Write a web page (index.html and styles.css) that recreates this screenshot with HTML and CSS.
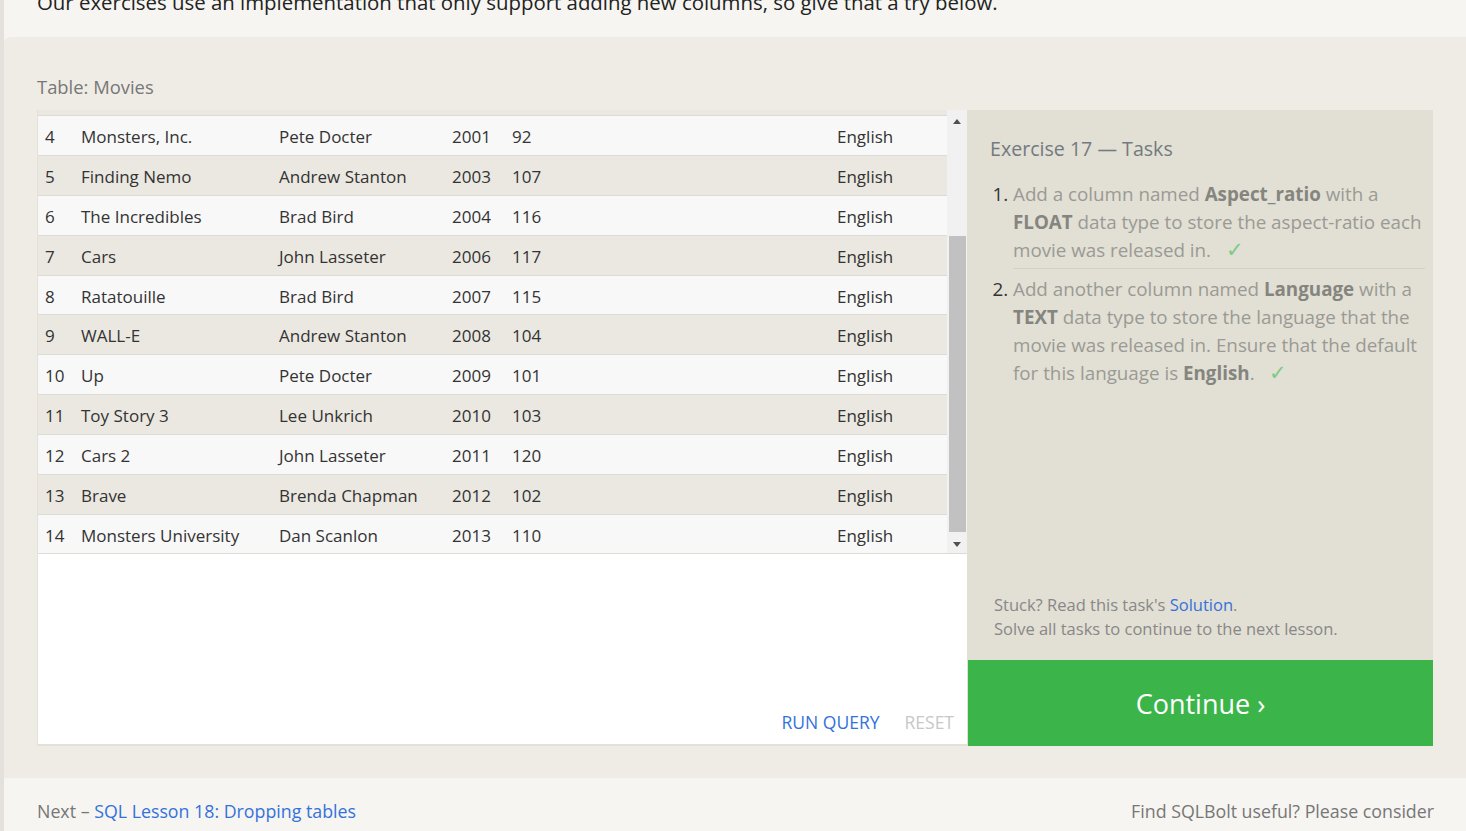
FILE: index.html
```html
<!DOCTYPE html>
<html>
<head>
<meta charset="utf-8">
<link rel="stylesheet" href="styles.css">
</head>
<body>
<div class="page">
  <div class="strip"></div>
  <div class="main">
    <div class="intro">
      <p>Our exercises use an implementation that only support adding new columns, so give that a try below.</p>
    </div>
    <section class="exercise">
      <div class="table-label">Table: Movies</div>
      <div class="workspace">
        <div class="left-pane">
          <div class="table-box">
            <div class="rows">
              <div class="row odd partial"><span></span><span></span><span></span><span></span><span></span><span></span><span></span></div>
              <div class="row even"><span>4</span><span>Monsters, Inc.</span><span>Pete Docter</span><span>2001</span><span>92</span><span></span><span>English</span></div>
              <div class="row odd"><span>5</span><span>Finding Nemo</span><span>Andrew Stanton</span><span>2003</span><span>107</span><span></span><span>English</span></div>
              <div class="row even"><span>6</span><span>The Incredibles</span><span>Brad Bird</span><span>2004</span><span>116</span><span></span><span>English</span></div>
              <div class="row odd"><span>7</span><span>Cars</span><span>John Lasseter</span><span>2006</span><span>117</span><span></span><span>English</span></div>
              <div class="row even"><span>8</span><span>Ratatouille</span><span>Brad Bird</span><span>2007</span><span>115</span><span></span><span>English</span></div>
              <div class="row odd"><span>9</span><span>WALL-E</span><span>Andrew Stanton</span><span>2008</span><span>104</span><span></span><span>English</span></div>
              <div class="row even"><span>10</span><span>Up</span><span>Pete Docter</span><span>2009</span><span>101</span><span></span><span>English</span></div>
              <div class="row odd"><span>11</span><span>Toy Story 3</span><span>Lee Unkrich</span><span>2010</span><span>103</span><span></span><span>English</span></div>
              <div class="row even"><span>12</span><span>Cars 2</span><span>John Lasseter</span><span>2011</span><span>120</span><span></span><span>English</span></div>
              <div class="row odd"><span>13</span><span>Brave</span><span>Brenda Chapman</span><span>2012</span><span>102</span><span></span><span>English</span></div>
              <div class="row even last"><span>14</span><span>Monsters University</span><span>Dan Scanlon</span><span>2013</span><span>110</span><span></span><span>English</span></div>
            </div>
            <div class="scrollbar">
              <div class="arrow up"></div>
              <div class="track"><div class="thumb"></div></div>
              <div class="arrow down"></div>
            </div>
          </div>
          <div class="editor">
            <div class="editor-actions">
              <span class="run">RUN QUERY</span>
              <span class="reset">RESET</span>
            </div>
          </div>
        </div>
        <div class="right-pane">
          <div class="tasks">
            <h2 class="tasks-title">Exercise 17 — Tasks</h2>
            <ol class="task-list">
              <li class="task done">Add a column named <b>Aspect_ratio</b> with a <b>FLOAT</b> data type to store the aspect-ratio each movie was released in. <span class="check">✓</span></li>
              <li class="task done">Add another column named <b>Language</b> with a <b>TEXT</b> data type to store the language that the movie was released in. Ensure that the default for this language is <b>English</b>. <span class="check">✓</span></li>
            </ol>
            <div class="help">
              <div>Stuck? Read this task's <a class="link">Solution</a>.</div>
              <div>Solve all tasks to continue to the next lesson.</div>
            </div>
          </div>
          <div class="continue">Continue ›</div>
        </div>
      </div>
    </section>
    <footer class="footer">
      <div class="next">Next – <a class="link">SQL Lesson 18: Dropping tables</a></div>
      <div class="support">Find SQLBolt useful? Please consider</div>
    </footer>
  </div>
</div>
</body>
</html>
```
FILE: styles.css
```css
* { box-sizing: border-box; }
html, body {
  margin: 0;
  padding: 0;
  height: 100%;
  overflow: hidden;
}
body {
  background: #f6f5f1;
  font-family: "Open Sans", "Noto Sans", sans-serif;
  color: #333;
}
.page {
  display: flex;
  height: 831px;
}
.strip {
  width: 4px;
  flex: 0 0 4px;
  background: #e4e0dc;
}
.main {
  flex: 1;
  display: flex;
  flex-direction: column;
  min-width: 0;
}
.intro {
  height: 37px;
  overflow: hidden;
  padding-left: 33px;
}
.intro p {
  margin: -12px 0 0 0;
  font-size: 20.4px;
  line-height: 28px;
  color: #222;
  white-space: nowrap;
}
.exercise {
  background: #efece5;
  border-top-left-radius: 6px;
  padding: 38px 33px 32px 33px;
}
.table-label {
  font-size: 18.4px;
  line-height: 24px;
  color: #777;
  margin-bottom: 11px;
}
.workspace {
  display: flex;
  height: 636px;
}
.left-pane {
  width: 930px;
  flex: 0 0 930px;
  display: flex;
  flex-direction: column;
  background: #fff;
  border-bottom: 2px solid #e4e1d9;
  border-left: 1px solid #e4e1d9;
}
.table-box {
  height: 444px;
  display: flex;
  border-bottom: 1px solid #dedbd3;
  overflow: hidden;
}
.rows {
  flex: 1;
  display: flex;
  flex-direction: column;
}
.row {
  display: grid;
  grid-template-columns: 36px 198px 173px 60px 160px 165px 117px;
  height: 39.9px;
  flex: 0 0 39.9px;
  align-items: center;
  padding-top: 2px;
  border-bottom: 1px solid #dcdcd6;
  font-size: 17px;
  color: #333;
}
.row span {
  padding-left: 7px;
  white-space: nowrap;
}
.row.partial {
  height: 6px;
  flex: 0 0 6px;
  padding-top: 0;
}
.row.last {
  border-bottom: none;
}
.row.even { background: #f8f8f8; }
.row.odd { background: #eae8e1; }
.scrollbar {
  width: 21px;
  flex: 0 0 21px;
  background: #f1f1f1;
  display: flex;
  flex-direction: column;
  align-items: center;
}
.arrow {
  height: 20px;
  flex: 0 0 20px;
  width: 100%;
  position: relative;
}
.arrow::after {
  content: "";
  position: absolute;
  left: 6px;
  width: 0;
  height: 0;
  border-left: 4.5px solid transparent;
  border-right: 4.5px solid transparent;
}
.arrow.up::after {
  top: 9px;
  border-bottom: 5px solid #505050;
}
.arrow.down::after {
  top: 8px;
  border-top: 5px solid #505050;
}
.track {
  flex: 1;
  width: 100%;
  padding: 106px 2px 2px 2px;
}
.thumb {
  height: 296px;
  background: #c1c1c1;
}
.editor {
  flex: 1;
  display: flex;
  flex-direction: column;
  justify-content: flex-end;
}
.editor-actions {
  display: flex;
  justify-content: flex-end;
  gap: 25px;
  padding: 0 13px 10px 0;
  font-size: 17.5px;
  line-height: 24px;
}
.run { color: #3472db; }
.reset { color: #c8c8c8; }
.right-pane {
  flex: 1;
  display: flex;
  flex-direction: column;
  background: #e2dfd4;
}
.tasks {
  flex: 1;
  display: flex;
  flex-direction: column;
  padding: 25px 8px 19px 23px;
}
.tasks-title {
  margin: 0 0 17px 0;
  font-weight: normal;
  font-size: 19.6px;
  line-height: 28px;
  color: #737a80;
}
.task-list {
  margin: 0;
  padding-left: 23px;
  font-size: 18.8px;
  line-height: 28px;
}
.task {
  color: #9a9a94;
  padding-bottom: 4px;
  margin-bottom: 6px;
  border-bottom: 1px solid #d3d0c5;
}
.task:last-child { border-bottom: none; }
.task::marker { color: #333; }
.task b { color: #85857f; font-weight: bold; }
.check {
  color: #7ccb84;
  margin-left: 10px;
  font-family: "DejaVu Sans", sans-serif;
  font-size: 21px;
  font-weight: 200;
}
.help {
  margin-top: auto;
  padding-left: 4px;
  font-size: 16.5px;
  line-height: 24px;
  color: #888;
}
.link { color: #3472db; text-decoration: none; }
.continue {
  height: 86px;
  flex: 0 0 86px;
  margin-left: 1px;
  background: #3bb54a;
  color: #fff;
  font-size: 27px;
  display: flex;
  align-items: center;
  justify-content: center;
}
.footer {
  display: flex;
  justify-content: space-between;
  padding: 20px 32px 0 33px;
  font-size: 17.8px;
  line-height: 26px;
  color: #777;
}
.footer .link { color: #3472db; }
```
